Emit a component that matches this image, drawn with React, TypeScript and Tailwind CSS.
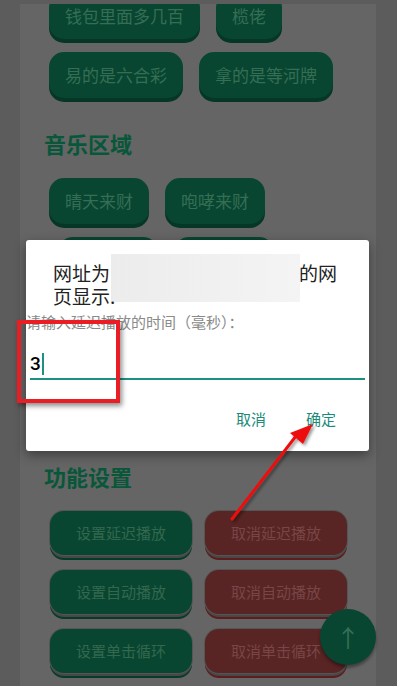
import React from 'react';

const FONT = { fontFamily: '"Noto Sans CJK SC", "Noto Sans", sans-serif' };

const Pill = ({ text }: { text: string }) => (
  <div className="h-[46px] px-[16px] rounded-[15px] bg-[#084631] shadow-[0_4px_0_#063726] flex items-center text-[17px] text-[#356e55] whitespace-nowrap">
    {text}
  </div>
);

const FuncBtn = ({ text, red }: { text: string; red?: boolean }) => (
  <div
    className={
      red
        ? 'w-[142px] h-[44px] rounded-[14px] bg-[#582424] shadow-[0_0_0_1px_#555555,0_3px_0_#484848,0_5px_0_#5e1c1c] flex items-center justify-center text-[15px] text-[#784646]'
        : 'w-[142px] h-[44px] rounded-[14px] bg-[#084631] shadow-[0_0_0_1px_#555555,0_3px_0_#484848,0_5px_0_#063b28] flex items-center justify-center text-[15px] text-[#33684f]'
    }
  >
    {text}
  </div>
);

export default function App() {
  return (
    <div className="relative w-[397px] h-[686px] overflow-hidden bg-[#5c5c5c]" style={FONT}>
      {/* page card, dimmed */}
      <div className="ml-[20px] mt-[4px] w-[356px] h-[682px] overflow-hidden bg-[#656565]">
        <div className="-mt-[11px] pl-[29px]">
          <div className="flex gap-[16px]">
            <Pill text="钱包里面多几百" />
            <Pill text="榄佬" />
          </div>
          <div className="flex gap-[16px] mt-[13px]">
            <Pill text="易的是六合彩" />
            <Pill text="拿的是等河牌" />
          </div>
          <div className="-ml-[5px] mt-[30px] mb-[20px] h-[30px] leading-[30px] text-[22px] font-bold text-[#08573a]">
            音乐区域
          </div>
          <div className="flex gap-[16px]">
            <Pill text="晴天来财" />
            <Pill text="咆哮来财" />
          </div>
          <div className="flex gap-[16px] mt-[13px] pl-[9px]">
            <Pill text="好运来财" />
            <Pill text="发财发财" />
          </div>
          <div className="flex gap-[16px] mt-[13px]">
            <Pill text="恭喜发财" />
            <Pill text="财神到" />
          </div>
          <div className="flex gap-[16px] mt-[13px]">
            <Pill text="大吉大利" />
          </div>
          <div className="-ml-[5px] mt-[60px] mb-[20px] h-[30px] leading-[30px] text-[22px] font-bold text-[#08573a]">
            功能设置
          </div>
          <div className="flex flex-col gap-[15px] pl-[1px]">
            <div className="flex gap-[13px]">
              <FuncBtn text="设置延迟播放" />
              <FuncBtn text="取消延迟播放" red />
            </div>
            <div className="flex gap-[13px]">
              <FuncBtn text="设置自动播放" />
              <FuncBtn text="取消自动播放" red />
            </div>
            <div className="flex gap-[13px]">
              <FuncBtn text="设置单击循环" />
              <FuncBtn text="取消单击循环" red />
            </div>
          </div>
        </div>
      </div>

      {/* floating back-to-top button */}
      <div className="absolute left-[320px] top-[609px] w-[56px] h-[56px] rounded-full bg-[#084631] shadow-[0_3px_3px_rgba(0,0,0,0.35)] flex items-center justify-center text-[24px] text-[#356e55]">
        ↑
      </div>

      {/* prompt dialog */}
      <div className="absolute left-[26px] top-[240px] w-[343px] h-[211px] bg-white rounded-[3px] shadow-[0_4px_12px_rgba(0,0,0,0.4)] flex flex-col">
        <div className="relative pl-[27px] pr-[20px] pt-[21px] text-[19px] leading-[23px] text-[#222]">
          <div className="absolute left-[85px] top-[14px] w-[189px] h-[48px] bg-gradient-to-r from-[#ececec] to-[#f4f4f4]" />
          <div className="relative flex">
            <span>网址为</span>
            <span className="w-[189px]" />
            <span>的网</span>
          </div>
          <div className="relative">页显示.</div>
        </div>
        <div className="mt-[5px] text-[15px] leading-[20px] text-[#8a8a8a]">请输入延迟播放的时间（毫秒）：</div>
        <div className="mx-[4px] mt-[20px] flex items-center h-[28px] border-b-[2px] border-[#1d9080] pb-[2px]">
          <span className="text-[19px] text-black font-medium" style={{ fontFamily: '"Roboto", sans-serif' }}>3</span>
          <span className="ml-[1px] w-[2px] h-[22px] bg-[#1d9080]" />
        </div>
        <div className="mt-[28px] flex justify-end gap-[40px] pr-[33px] text-[15px] text-[#1b8a7b]">
          <span>取消</span>
          <span>确定</span>
        </div>
      </div>

      {/* annotation: red box */}
      <div className="absolute left-[17px] top-[320px] w-[103px] h-[83px] border-[4px] border-[#ea1c24] shadow-[2px_3px_5px_rgba(0,0,0,0.45)]" />

      {/* annotation: arrow */}
      <svg className="absolute left-0 top-0" width="397" height="686" viewBox="0 0 397 686">
        <defs>
          <filter id="sh" x="-20%" y="-20%" width="140%" height="140%">
            <feDropShadow dx="2" dy="2" stdDeviation="1.5" floodColor="#000" floodOpacity="0.4" />
          </filter>
        </defs>
        <g filter="url(#sh)">
          <line x1="232" y1="519" x2="296" y2="436" stroke="#ee1111" strokeWidth="3" strokeLinecap="round" />
          <polygon points="313,424 290,433 303,444" fill="#ee1111" />
        </g>
      </svg>
    </div>
  );
}
